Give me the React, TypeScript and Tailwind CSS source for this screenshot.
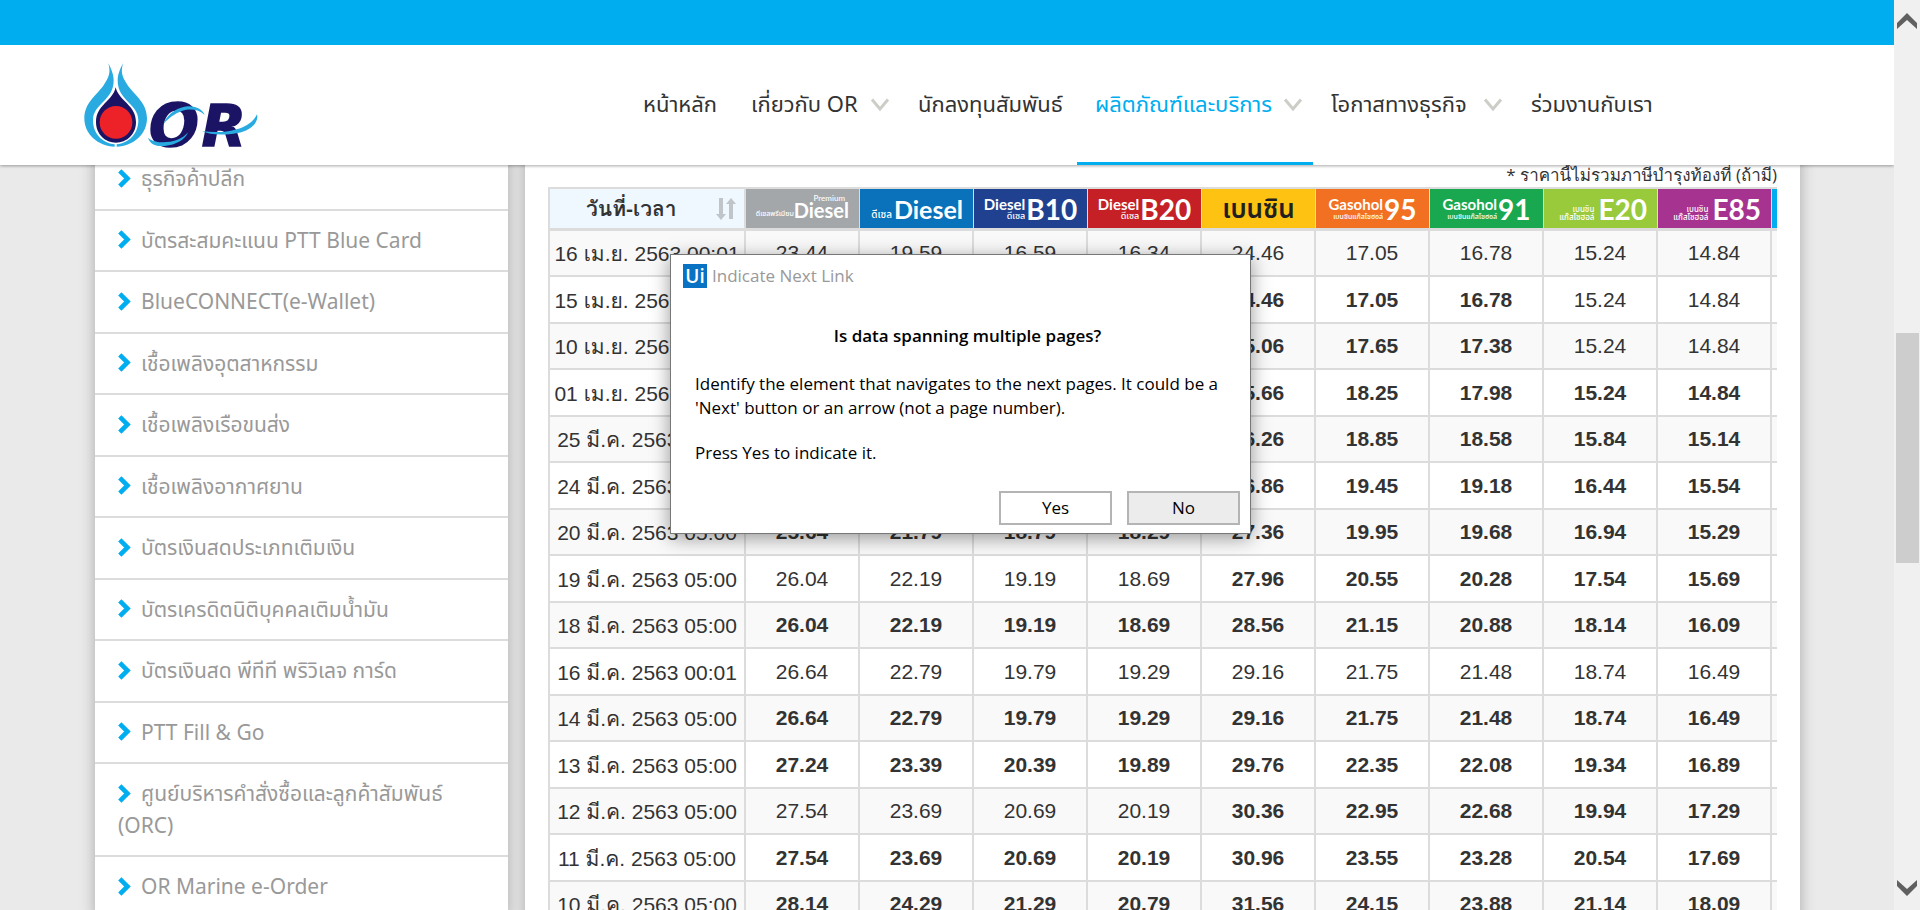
const navItems = [
  { label: 'หน้าหลัก', width: 'w-[108px]', menu: false, active: false },
  { label: 'เกี่ยวกับ OR', width: 'w-[167px]', menu: true, active: false },
  { label: 'นักลงทุนสัมพันธ์', width: 'w-[177px]', menu: false, active: false },
  { label: 'ผลิตภัณฑ์และบริการ', width: 'w-[236px]', menu: true, active: true },
  { label: 'โอกาสทางธุรกิจ', width: 'w-[200px]', menu: true, active: false },
  { label: 'ร่วมงานกับเรา', width: 'w-[156px]', menu: false, active: false },
];

const sideItems = [
  'ธุรกิจค้าปลีก',
  'บัตรสะสมคะแนน PTT Blue Card',
  'BlueCONNECT(e-Wallet)',
  'เชื้อเพลิงอุตสาหกรรม',
  'เชื้อเพลิงเรือขนส่ง',
  'เชื้อเพลิงอากาศยาน',
  'บัตรเงินสดประเภทเติมเงิน',
  'บัตรเครดิตนิติบุคคลเติมน้ำมัน',
  'บัตรเงินสด พีทีที พริวิเลจ การ์ด',
  'PTT Fill & Go',
  'ศูนย์บริหารคำสั่งซื้อและลูกค้าสัมพันธ์ (ORC)',
  'OR Marine e-Order',
];

// A leading "*" marks a price that changed on that day.
const rows: [string, string[]][] = [
  ['16 เม.ย. 2563 00:01', ['23.44', '19.59', '16.59', '16.34', '24.46', '17.05', '16.78', '15.24', '14.84']],
  ['15 เม.ย. 2563 05:00', ['*23.44', '*19.59', '*16.59', '*16.34', '*24.46', '*17.05', '*16.78', '15.24', '14.84']],
  ['10 เม.ย. 2563 05:00', ['*24.04', '*20.19', '*17.19', '*16.94', '*25.06', '*17.65', '*17.38', '15.24', '14.84']],
  ['01 เม.ย. 2563 05:00', ['*24.04', '*20.19', '*17.19', '*16.94', '*25.66', '*18.25', '*17.98', '*15.24', '*14.84']],
  ['25 มี.ค. 2563 05:00', ['*24.64', '*20.79', '*17.79', '*17.29', '*26.26', '*18.85', '*18.58', '*15.84', '*15.14']],
  ['24 มี.ค. 2563 05:00', ['*25.04', '*21.19', '*18.19', '*17.69', '*26.86', '*19.45', '*19.18', '*16.44', '*15.54']],
  ['20 มี.ค. 2563 05:00', ['*25.64', '*21.79', '*18.79', '*18.29', '*27.36', '*19.95', '*19.68', '*16.94', '*15.29']],
  ['19 มี.ค. 2563 05:00', ['26.04', '22.19', '19.19', '18.69', '*27.96', '*20.55', '*20.28', '*17.54', '*15.69']],
  ['18 มี.ค. 2563 05:00', ['*26.04', '*22.19', '*19.19', '*18.69', '*28.56', '*21.15', '*20.88', '*18.14', '*16.09']],
  ['16 มี.ค. 2563 00:01', ['26.64', '22.79', '19.79', '19.29', '29.16', '21.75', '21.48', '18.74', '16.49']],
  ['14 มี.ค. 2563 05:00', ['*26.64', '*22.79', '*19.79', '*19.29', '*29.16', '*21.75', '*21.48', '*18.74', '*16.49']],
  ['13 มี.ค. 2563 05:00', ['*27.24', '*23.39', '*20.39', '*19.89', '*29.76', '*22.35', '*22.08', '*19.34', '*16.89']],
  ['12 มี.ค. 2563 05:00', ['27.54', '23.69', '20.69', '20.19', '*30.36', '*22.95', '*22.68', '*19.94', '*17.29']],
  ['11 มี.ค. 2563 05:00', ['*27.54', '*23.69', '*20.69', '*20.19', '*30.96', '*23.55', '*23.28', '*20.54', '*17.69']],
  ['10 มี.ค. 2563 05:00', ['*28.14', '*24.29', '*21.29', '*20.79', '*31.56', '*24.15', '*23.88', '*21.14', '*18.09']],
];

const thaiFont = "font-['Noto_Sans_Thai','Open_Sans',sans-serif]";
const loopedFont = "font-['Liberation_Sans','Loma',sans-serif]";
const fuelFont = "font-['Lato','Noto_Sans_Thai',sans-serif]";

function Logo() {
  const wing =
    'M97 25 C104 52 101 64 82 92 C58 124 25 145 25 190 C25 238 66 274 116 275 L116 268 C78 264 51 236 51 196 C51 146 113 138 113 76 C113 58 105 40 97 25 Z';
  return (
    <svg viewBox="0 0 576 300" className="h-[100px] w-[192px] overflow-visible" role="img" aria-label="OR">
      <path d={wing} fill="#29abe2" />
      <path d={wing} fill="#29abe2" transform="matrix(-1 0 0 1 238 0)" />
      <path d="M119 97 C128 138 180 150 180 201 C180 238 152 263 120 263 C88 263 60 238 60 201 C60 150 111 138 119 97 Z" fill="#1b1464" />
      <circle cx="120" cy="202" r="49" fill="#ed2229" />
      <g fill="#1b1464" stroke="#1b1464" strokeWidth="5" fontFamily="DejaVu Sans" fontWeight="700" fontStyle="italic">
        <text x="219" y="274" fontSize="176">O</text>
        <text x="377" y="274" fontSize="172">R</text>
      </g>
      <path d="M262 206 C278 172 308 156 336 154 C362 153 380 164 386 180 C372 166 350 161 328 165 C304 170 282 186 262 206 Z" fill="#29abe2" />
      <path d="M216 248 C236 266 276 264 300 256 C318 250 330 240 336 232 C328 254 300 270 266 273 C240 275 222 268 216 248 Z" fill="#29abe2" />
      <path d="M378 228 C440 238 520 226 543 178 C550 204 520 228 484 234 C442 242 402 240 378 228 Z" fill="#29abe2" />
    </svg>
  );
}

function MenuChevron() {
  return (
    <svg viewBox="0 0 20 14" className="h-[14px] w-5" fill="none" stroke="#cdcdc8" strokeWidth="3" aria-hidden="true">
      <path d="M2 1.5 L10 11 L18 1.5" />
    </svg>
  );
}

function ItemChevron() {
  return (
    <svg
      viewBox="0 0 13 19"
      className="mr-2.5 mb-1 inline h-[19px] w-[13px]"
      fill="none"
      stroke="#00adef"
      strokeWidth="4.6"
      aria-hidden="true"
    >
      <path d="M1.8 1.8 L9.5 9.5 L1.8 17.2" />
    </svg>
  );
}

function SortArrows() {
  return (
    <svg viewBox="0 0 20 22" className="h-[22px] w-5" fill="#bfc5c9" aria-hidden="true">
      <path d="M3 0 H7 V16 H10 L5 22 L0 16 H3 Z" />
      <path d="M13 21 H17 V6 H20 L15 0 L10 6 H13 Z" />
    </svg>
  );
}

function Stacked({ top, bottom, big }: { top: string; bottom: string; big: string }) {
  const small = bottom.length > 8 ? 'text-[7px]' : 'text-[9px]';
  return (
    <span className="flex items-center justify-center gap-px text-white">
      <span className="flex flex-col items-end text-right">
        <span className="text-[15px] leading-[14px] font-bold">{top}</span>
        <span className={`leading-[10px] font-medium ${small}`}>{bottom}</span>
      </span>
      <span className="text-[28px] leading-8 font-bold">{big}</span>
    </span>
  );
}

function Ethanol({ big }: { big: string }) {
  return (
    <span className="flex items-center justify-end gap-1 pr-2.5 text-white">
      <span className="flex flex-col pt-2 text-right text-[8px] leading-[8px] font-medium">
        <span>เบนซิน</span>
        <span>แก๊สโซฮอล์</span>
      </span>
      <span className="text-[28px] leading-8 font-bold">{big}</span>
    </span>
  );
}

const fuels = [
  {
    bg: 'bg-[#a3a7aa]',
    label: (
      <span className="flex items-end justify-end pr-2.5 pb-1 text-white">
        <span className="pb-0.5 text-[7px] leading-[8px] font-medium">ดีเซลพรีเมียม</span>
        <span className="flex flex-col items-end">
          <span className="pr-1 text-[8px] leading-[6px] font-medium">Premium</span>
          <span className="text-[20px] leading-[18px] font-bold">Diesel</span>
        </span>
      </span>
    ),
  },
  {
    bg: 'bg-[#0972ba]',
    label: (
      <span className="flex items-end justify-end gap-0.5 pr-2.5 text-white">
        <span className="pb-0.5 text-[10px] leading-[10px] font-medium">ดีเซล</span>
        <span className="text-[25px] leading-6 font-bold">Diesel</span>
      </span>
    ),
  },
  { bg: 'bg-[#20418f]', label: <Stacked top="Diesel" bottom="ดีเซล" big="B10" /> },
  { bg: 'bg-[#c42026]', label: <Stacked top="Diesel" bottom="ดีเซล" big="B20" /> },
  { bg: 'bg-[#fec312]', label: <span className="text-[26px] leading-8 font-semibold text-[#231f20]">เบนซิน</span> },
  { bg: 'bg-[#f27021]', label: <Stacked top="Gasohol" bottom="เบนซินแก๊สโซฮอล์" big="95" /> },
  { bg: 'bg-[#19a84f]', label: <Stacked top="Gasohol" bottom="เบนซินแก๊สโซฮอล์" big="91" /> },
  { bg: 'bg-[#98ca3c]', label: <Ethanol big="E20" /> },
  { bg: 'bg-[#a73391]', label: <Ethanol big="E85" /> },
  { bg: 'bg-[#00adef]', label: null },
];

function Header() {
  return (
    <header className="relative z-10 bg-white shadow-[0_1px_3px_rgba(0,0,0,0.35)]">
      <div className="h-[45px] bg-[#00adef]" />
      <div className="flex h-[120px] items-stretch justify-between pr-[225px] pl-[76px]">
        <a href="#" className="pt-[10px]">
          <Logo />
        </a>
        <nav className={`flex text-[22px] text-[#333] ${thaiFont}`}>
          {navItems.map((item) => (
            <a
              key={item.label}
              href="#"
              className={`flex items-center justify-between pl-[18px] whitespace-nowrap ${item.width} ${
                item.menu ? 'pr-2.5' : ''
              } ${item.active ? 'border-b-[3px] border-[#00adef] pt-[3px] text-[#00adef]' : ''}`}
            >
              {item.label}
              {item.menu && <MenuChevron />}
            </a>
          ))}
        </nav>
      </div>
    </header>
  );
}

function Sidebar() {
  return (
    <ul className={`w-[413px] shrink-0 bg-white text-[21px] leading-normal text-[#999] shadow-[0_0_14px_rgba(0,0,0,0.28)] ${thaiFont}`}>
      {sideItems.map((item) => (
        <li key={item} className="border-b-2 border-[#dcdcdc] pt-[15px] pr-8 pb-[13px] pl-[23px]">
          <a href="#">
            <ItemChevron />
            {item}
          </a>
        </li>
      ))}
    </ul>
  );
}

function PriceTable() {
  return (
    <div className="overflow-hidden">
      <table className={`w-[1338px] table-fixed border-separate border-spacing-0 text-center text-[21px] text-[#333] ${loopedFont}`}>
        <thead>
          <tr className="h-11">
            <th className="w-[198px] border-2 border-b-[3px] border-[#dcdcdc] bg-[#f0f8ff] p-0">
              <button type="button" className="flex w-full items-center justify-between pr-2 pl-9 font-bold">
                วันที่-เวลา
                <SortArrows />
              </button>
            </th>
            {fuels.map((fuel) => (
              <th
                key={fuel.bg}
                className={`border-t-2 border-r border-b-[3px] border-[#dcdcdc] p-0 whitespace-nowrap ${fuel.bg} ${fuelFont}`}
              >
                {fuel.label}
              </th>
            ))}
          </tr>
        </thead>
        <tbody>
          {rows.map(([date, prices]) => (
            <tr key={date} className="odd:h-[46px] odd:bg-[#f9f9f9] even:h-[47px] even:bg-white">
              <td className="border-x-2 border-b-2 border-[#dcdcdc] p-0 pt-0.5 whitespace-nowrap">{date}</td>
              {prices.map((price, i) => (
                <td
                  key={i}
                  className={`border-r-2 border-b-2 border-[#dcdcdc] p-0 ${price.startsWith('*') ? 'font-bold' : ''}`}
                >
                  {price.replace('*', '')}
                </td>
              ))}
              <td className="border-b-2 border-[#dcdcdc] p-0" />
            </tr>
          ))}
        </tbody>
      </table>
    </div>
  );
}

function Scrollbar() {
  return (
    <div className="flex w-[26px] shrink-0 flex-col items-center bg-[#f0f0f0]" aria-hidden="true">
      <svg viewBox="0 0 20 16" className="mt-[13px] h-4 w-5" fill="#606060">
        <path d="M0 10 L10 0 L20 10 V16 L10 7 L0 16 Z" />
      </svg>
      <div className="mt-[304px] h-[230px] w-[23px] bg-[#cdcdcd]" />
      <svg viewBox="0 0 20 16" className="mt-auto mb-[14px] h-4 w-5" fill="#606060">
        <path d="M0 6 L10 16 L20 6 V0 L10 9 L0 0 Z" />
      </svg>
    </div>
  );
}

function NextLinkDialog() {
  return (
    <div
      role="dialog"
      aria-labelledby="dialog-question"
      className="absolute top-[254px] left-[670px] z-20 flex w-[581px] flex-col border border-[#777] bg-white pr-2.5 pb-2 pl-2 font-['Open_Sans',sans-serif] text-[17px] leading-6 text-black shadow-[0_4px_18px_rgba(0,0,0,0.4)]"
    >
      <div className="flex items-center gap-[5px] pt-[9px] pl-1 text-[#999]">
        <span className="flex size-6 items-center justify-center bg-[#0972c3] text-[19px] leading-6 font-semibold text-white">Ui</span>
        Indicate Next Link
      </div>
      <div className="pt-9 pl-4">
        <h2 id="dialog-question" className="text-center font-semibold">
          Is data spanning multiple pages?
        </h2>
        <p className="pt-6 pr-4">
          Identify the element that navigates to the next pages. It could be a 'Next' button or an arrow (not a page number).
        </p>
        <p className="pt-[21px]">Press Yes to indicate it.</p>
      </div>
      <div className="flex justify-end gap-[15px] pt-[26px]">
        <button type="button" className="h-[34px] w-[113px] border-2 border-[#b4b4b4] bg-white">
          Yes
        </button>
        <button type="button" className="h-[34px] w-[113px] border-2 border-[#b4b4b4] bg-[#ececec]">
          No
        </button>
      </div>
    </div>
  );
}

export default function App() {
  return (
    <div className="relative flex h-screen overflow-hidden bg-[#eaeaea]">
      <div className="flex min-w-0 flex-1 flex-col overflow-hidden">
        <Header />
        <div className="-mt-4 flex min-h-0 flex-1 items-start gap-[17px] pr-[94px] pl-[95px]">
          <Sidebar />
          <main className="min-w-0 flex-1 bg-white px-[23px] pt-[13px] shadow-[0_0_14px_rgba(0,0,0,0.28)]">
            <p className="text-right font-['Open_Sans','Loma',sans-serif] text-[17px] leading-[25px] text-[#333]">
              * ราคานี้ไม่รวมภาษีบำรุงท้องที่ (ถ้ามี)
            </p>
            <PriceTable />
          </main>
        </div>
      </div>
      <Scrollbar />
      <NextLinkDialog />
    </div>
  );
}
